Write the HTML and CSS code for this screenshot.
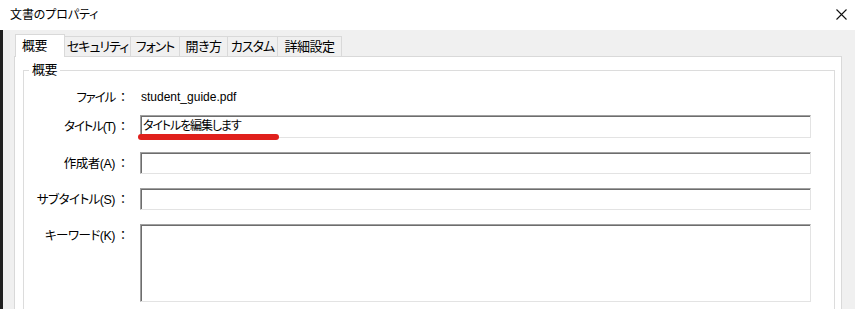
FILE: index.html
```html
<!DOCTYPE html>
<html lang="ja">
<head>
<meta charset="utf-8">
<title>文書のプロパティ</title>
<link rel="stylesheet" href="styles.css">
</head>
<body>
<div class="window">
  <div class="titlebar">
    <span class="title">文書のプロパティ</span>
    <svg class="close" width="11" height="11" viewBox="0 0 11 11"><path d="M0.5 0.5 L10.5 10.5 M10.5 0.5 L0.5 10.5" stroke="#111" stroke-width="1.1" fill="none"/></svg>
  </div>
  <div class="frame">
    <div class="edge"></div>
    <div class="dialog">
      <div class="tabs">
        <div class="tab active t1">概要</div>
        <div class="tab t2">セキュリティ</div>
        <div class="tab t3">フォント</div>
        <div class="tab t4">開き方</div>
        <div class="tab t5">カスタム</div>
        <div class="tab t6">詳細設定</div>
      </div>
      <div class="panel">
        <fieldset class="group">
          <legend>概要</legend>
          <div class="row row-file">
            <div class="label kana">ファイル<span class="colon">：</span></div>
            <div class="value">student_guide.pdf</div>
          </div>
          <div class="row row-title">
            <div class="label kana">タイトル(T)<span class="colon">：</span></div>
            <div class="field field-title">タイトルを編集します<span class="mark"></span></div>
          </div>
          <div class="row">
            <div class="label">作成者(A)<span class="colon">：</span></div>
            <div class="field"></div>
          </div>
          <div class="row">
            <div class="label">サブタイトル(S)<span class="colon">：</span></div>
            <div class="field"></div>
          </div>
          <div class="row row-multi">
            <div class="label">キーワード(K)<span class="colon">：</span></div>
            <div class="field field-multi"></div>
          </div>
        </fieldset>
      </div>
    </div>
    <div class="outside"></div>
  </div>
</div>
</body>
</html>
```
FILE: styles.css
```css
html, body {
  margin: 0;
  padding: 0;
  width: 863px;
  height: 309px;
  overflow: hidden;
  background: #ffffff;
}

body {
  font-family: "Liberation Sans", "Noto Sans CJK JP", sans-serif;
  font-size: 12px;
  color: #000;
  font-feature-settings: "palt";
  letter-spacing: -0.5px;
}

.window {
  width: 863px;
  height: 309px;
  display: flex;
  flex-direction: column;
}

.titlebar {
  height: 30px;
  flex: none;
  background: #ffffff;
  display: flex;
  align-items: center;
  justify-content: space-between;
  padding: 0 16px 0 10px;
}

.title {
  line-height: 16px;
  margin-top: -1px;
  letter-spacing: -0.1px;
}

.close {
  display: block;
  margin-top: -1px;
}

.frame {
  flex: 1;
  display: flex;
  min-height: 0;
}

.edge {
  width: 3px;
  flex: none;
  background: #202020;
}

.dialog {
  width: 852px;
  flex: none;
  background: #f0f0f0;
  padding-left: 11px;
  box-sizing: border-box;
  display: flex;
  flex-direction: column;
}

.outside {
  flex: 1;
  background: #ffffff;
}

.tabs {
  display: flex;
  align-items: flex-end;
  height: 22px;
  margin-top: 4px;
  padding-left: 1px;
  position: relative;
  z-index: 1;
}

.tab {
  box-sizing: border-box;
  height: 20px;
  line-height: 19px;
  text-align: center;
  white-space: nowrap;
  border-top: 1px solid #d9d9d9;
  border-right: 1px solid #d9d9d9;
  background: #f0f0f0;
  font-size: 13px;
}

.tab.active {
  height: 23px;
  margin-bottom: -1px;
  background: #ffffff;
  border: 1px solid #d9d9d9;
  border-bottom: none;
  text-align: left;
  padding-left: 6px;
  line-height: 21px;
}

.t1 { width: 50px; }
.t2 { width: 66px; letter-spacing: -1px; }
.t3 { width: 49px; letter-spacing: -1px; }
.t4 { width: 48px; }
.t5 { width: 50px; letter-spacing: -1px; }
.t6 { width: 64px; }

.panel {
  width: 828px;
  flex: 1;
  box-sizing: border-box;
  background: #ffffff;
  border: 1px solid #d9d9d9;
  border-bottom: none;
  padding: 5px 6px 0 8px;
}

.group {
  margin: 0;
  width: 812px;
  box-sizing: border-box;
  border: 1px solid #dcdcdc;
  border-bottom: none;
  padding: 8px 0 20px 0;
  min-width: 0;
}

.group legend {
  padding: 0 3px;
  margin-left: 5px;
  line-height: 16px;
  font-size: 13px;
}

.row {
  display: flex;
  align-items: flex-start;
  margin-bottom: 14px;
}

.row-file {
  height: 22px;
  align-items: center;
  margin-bottom: 7px;
}

.label {
  width: 106px;
  height: 22px;
  flex: none;
  text-align: right;
  line-height: 22px;
  white-space: nowrap;
  margin-right: 10px;
  font-size: 12.5px;
}

.label.kana {
  letter-spacing: -1.2px;
}

.colon {
  display: inline-block;
  width: 14px;
  text-align: center;
  font-family: "Noto Sans CJK JP", sans-serif;
  font-feature-settings: normal;
  letter-spacing: 0;
  margin-left: 1px;
}

.value {
  line-height: 22px;
  margin-left: 1px;
  letter-spacing: 0;
}

.field {
  position: relative;
  width: 671px;
  height: 22px;
  flex: none;
  box-sizing: border-box;
  border: 1px solid;
  border-color: #a0a0a0 #e3e3e3 #e3e3e3 #a0a0a0;
  box-shadow: inset 1px 1px 0 #6d6d6d;
  background: #ffffff;
  padding-left: 2px;
  line-height: 19px;
  white-space: nowrap;
}

.field-title {
  height: 23px;
  line-height: 21px;
  letter-spacing: -1.1px;
}

.field-multi {
  height: 78px;
}

.mark {
  position: absolute;
  left: -3px;
  top: 18px;
  width: 141px;
  height: 6px;
  border-radius: 3px;
  background: #e0201c;
}
```
